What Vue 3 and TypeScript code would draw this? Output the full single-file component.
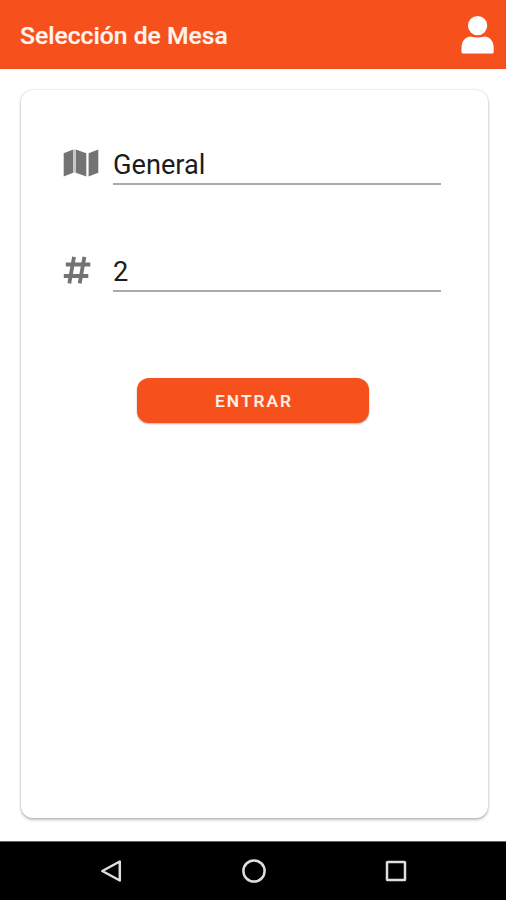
<script setup lang="ts">
import { ref } from 'vue'

const area = ref('General')
const table = ref('2')
</script>

<template>
  <div class="screen">
    <header class="bar">
      <h1>Selección de Mesa</h1>
      <svg class="user" viewBox="0 0 33 38" width="33" height="38">
        <circle cx="16.6" cy="9.6" r="9.6" />
        <path d="M.5 36V32C.5 25 4.500 20.800 9.700 20.600Q16.600 22.600 23.500 20.600C28.700 20.800 32.700 25 32.700 32V36Q32.700 37.500 31.200 37.500H2Q.5 37.500 .5 36Z" />
      </svg>
    </header>

    <main class="body">
      <form class="card" @submit.prevent>
        <label class="field">
          <svg class="icon" viewBox="0 0 36 28" width="36" height="28">
            <path d="M.7 4.300 10.200.6V23.700L.7 27.400ZM12.800.6 23.300 4.300V27.400L12.800 23.700ZM25.600 4.300 35.300.6V23.700L25.600 27.400Z" />
            <path class="fold" d="M10.200.6 12.800.6V23.700H10.200Z" />
          </svg>
          <input v-model="area" type="text" />
        </label>
        <label class="field">
          <svg class="icon hash" viewBox="0 0 36 28" width="36" height="28">
            <path d="M11 .8 6.300 27.300M21.400.8 16.700 27.300M2.800 8.500H27.300M.8 20H25.300" />
          </svg>
          <input v-model="table" type="text" />
        </label>
        <button type="submit">ENTRAR</button>
      </form>
    </main>

    <nav class="nav">
      <svg viewBox="0 0 24 24" width="24" height="24"><path d="M20.800 2.500V21.500L3.300 12Z" /></svg>
      <svg viewBox="0 0 24 24" width="24" height="24"><circle cx="12" cy="12" r="10.600" /></svg>
      <svg viewBox="0 0 24 24" width="24" height="24"><rect x="3" y="3" width="18" height="18" rx=".6" /></svg>
    </nav>
  </div>
</template>

<style>
body {
  margin: 0;
  background: #fff;
}
</style>

<style scoped>
.screen {
  display: flex;
  flex-direction: column;
  height: 900px;
  background: #fff;
  font-family: Roboto, "Liberation Sans", sans-serif;
}

.bar {
  box-sizing: border-box;
  display: flex;
  align-items: center;
  justify-content: space-between;
  height: 69px;
  padding: 0 12px 0 20px;
  background: #f6511d;
  border-bottom: 1px solid #ee4b18;
}

h1 {
  margin: 4px 0 0;
  color: #fff5ee;
  font-size: 24.7px;
  font-weight: 500;
  line-height: 28px;
  -webkit-text-stroke: 0.2px #fff5ee;
}

.user {
  margin-top: 1px;
  fill: #fff;
}

.body {
  box-sizing: border-box;
  display: flex;
  flex: 1;
  padding: 21px 18px 23px 21px;
}

.card {
  box-sizing: border-box;
  display: flex;
  flex: 1;
  flex-direction: column;
  min-width: 0;
  padding: 52px 47px 0 42px;
  border-radius: 12px;
  background: #fff;
  box-shadow: 0 0 2px rgba(0, 0, 0, 0.22), 0 2px 3px rgba(0, 0, 0, 0.24);
}

.field {
  display: flex;
  gap: 14px;
  height: 43px;
  margin-bottom: 64px;
}

.icon {
  flex: none;
  margin-top: 7px;
  fill: #737373;
}

.fold {
  fill: #c4c4c4;
}

.hash path {
  fill: none;
  stroke: #737373;
  stroke-width: 3.8;
}

input {
  box-sizing: border-box;
  flex: 1;
  min-width: 0;
  height: 43px;
  padding: 5px 0 0;
  border: 0;
  border-bottom: 2px solid #aaa;
  outline: 0;
  background: transparent;
  color: #1c1c1c;
  font: 400 27.2px Roboto, "Liberation Sans", sans-serif;
}

button {
  align-self: center;
  width: 232px;
  height: 45px;
  margin: 22px 0 0 2px;
  padding: 0 0 0 2px;
  border: 0;
  border-radius: 12px;
  background: #f6511d;
  box-shadow: 0 1px 2px rgba(0, 0, 0, 0.3);
  color: #fff0e6;
  font: 500 17.3px Roboto, "Liberation Sans", sans-serif;
  letter-spacing: 2.1px;
  -webkit-text-stroke: 0.2px #fff0e6;
}

.nav {
  box-sizing: border-box;
  display: flex;
  align-items: center;
  justify-content: space-between;
  height: 59px;
  padding: 0 98px 0 99px;
  border-top: 1px solid #666;
  background: #000;
}

.nav svg {
  fill: none;
  stroke: #dedede;
  stroke-width: 2.5;
  stroke-linejoin: round;
}
</style>
